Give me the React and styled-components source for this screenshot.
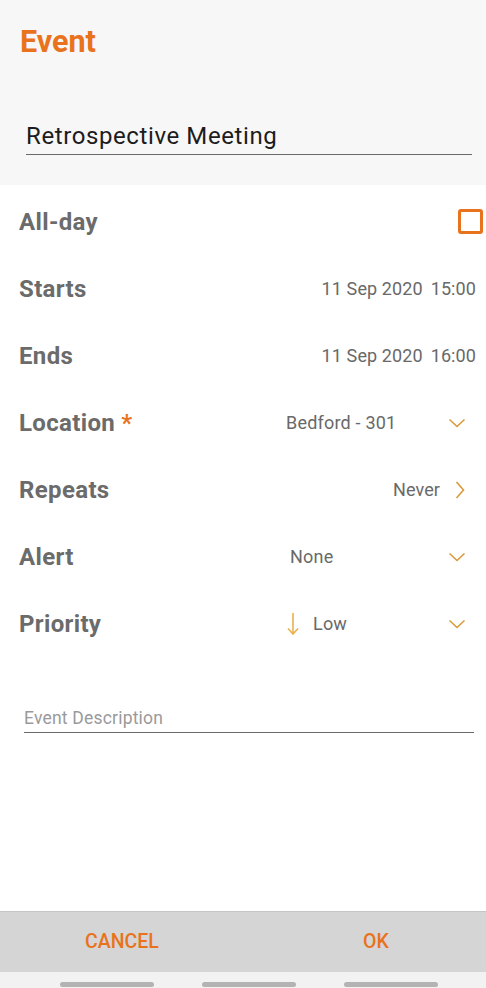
import React, {useState} from "react";
import styled, {createGlobalStyle} from "styled-components";

const ORANGE = "#e8731c";
const GOLD = "#d99a3c";

const GlobalStyle = createGlobalStyle`
    html, body {
        margin: 0;
        padding: 0;
        background: #fff;
        font-family: Roboto, "Liberation Sans", sans-serif;
    }
    * { box-sizing: border-box; }
`

const Page = styled.div`
    width: 486px;
    height: 988px;
    display: flex;
    flex-direction: column;
    background: #fff;
`

const Header = styled.div`
    height: 185px;
    background: #f7f7f7;
    padding: 24px 14px 0 20px;
    display: flex;
    flex-direction: column;
`

const Title = styled.h1`
    margin: 0;
    font-size: 30.5px;
    font-weight: 700;
    color: ${ORANGE};
    line-height: 36px;
`

const TitleInput = styled.input`
    margin: 62px 0 0 6px;
    width: 446px;
    border: none;
    border-bottom: 1.5px solid #6a6a6a;
    background: transparent;
    font-family: inherit;
    font-size: 24px;
    letter-spacing: 0.6px;
    color: #1c1c1c;
    padding: 0 0 4px 0;
    outline: none;
`

const Rows = styled.div`
    margin-top: 3px;
    display: flex;
    flex-direction: column;
`

const Row = styled.div`
    height: 67px;
    display: flex;
    align-items: center;
    padding: 0 10px 0 19px;
`

const Label = styled.span`
    font-size: 24px;
    font-weight: 700;
    letter-spacing: 0.35px;
    color: #6b6b6b;
    flex: 1;
`

const Star = styled.span`
    color: ${ORANGE};
    margin-left: 6px;
`

const Value = styled.span`
    font-size: 18px;
    letter-spacing: 0.1px;
    color: #696969;
`

const Time = styled.span`
    margin-left: 8px;
`

const Select = styled.div`
    width: 190px;
    display: flex;
    align-items: center;
    padding-left: ${p => p.$indent || 0}px;
`

const SelectText = styled.span`
    flex: 1;
    font-size: 18px;
    letter-spacing: 0.2px;
    color: #696969;
    display: flex;
    align-items: center;
    gap: 14px;
`

const Check = styled.div`
    width: 25px;
    height: 25px;
    margin-right: -7px;
    border: 3px solid ${ORANGE};
    border-radius: 3px;
`

const Icon = styled.svg`
    flex-shrink: 0;
    margin-left: ${p => p.$left || 0}px;
    margin-right: ${p => p.$right || 0}px;
`

const Desc = styled.input`
    margin: 51px 0 0 24px;
    width: 450px;
    border: none;
    border-bottom: 1.5px solid #6a6a6a;
    background: transparent;
    font-family: inherit;
    font-size: 17.5px;
    letter-spacing: 0.2px;
    padding: 0 0 4px 0;
    outline: none;
    &::placeholder { color: #9a9a9a; }
`

const Spacer = styled.div`
    flex: 1;
`

const Footer = styled.div`
    height: 61px;
    background: #d5d5d5;
    border-top: 1px solid #c6c6c6;
    display: grid;
    grid-template-columns: 244px 1fr;
    column-gap: 22px;
`

const FootButton = styled.button`
    border: none;
    background: transparent;
    font-family: inherit;
    font-size: 19.5px;
    font-weight: 500;
    color: ${ORANGE};
    cursor: pointer;
    padding: 0 0 2px;
`

const NavBar = styled.div`
    height: 16px;
    background: #f2f2f2;
    display: flex;
    justify-content: center;
    align-items: flex-end;
    gap: 48px;
    padding: 0 0 1px 12px;
`

const Pill = styled.div`
    width: 94px;
    height: 5px;
    border-radius: 3px;
    background: #b3b3b3;
`

const ChevronDown = () => (
    <Icon width="18" height="12" viewBox="0 0 18 12" $right={10}>
        <path d="M1.5 2.5 L9 9.5 L16.5 2.5" fill="none" stroke={GOLD} strokeWidth="1.6"/>
    </Icon>
)

const ChevronRight = () => (
    <Icon width="12" height="20" viewBox="0 0 12 20" $left={14} $right={10}>
        <path d="M2.5 2 L9.5 10 L2.5 18" fill="none" stroke={GOLD} strokeWidth="1.6"/>
    </Icon>
)

const ArrowDown = () => (
    <Icon width="12" height="24" viewBox="0 0 12 24">
        <path d="M6 1 V22 M1 16.5 L6 22 L11 16.5" fill="none" stroke="#e9b24f" strokeWidth="1.6"/>
    </Icon>
)

function App(){
    const [title, setTitle] = useState("Retrospective Meeting");
    const [desc, setDesc] = useState("");

    return(
        <Page>
            <GlobalStyle/>
            <Header>
                <Title>Event</Title>
                <TitleInput value={title} onChange={(e) => setTitle(e.target.value)}/>
            </Header>
            <Rows>
                <Row>
                    <Label>All-day</Label>
                    <Check/>
                </Row>
                <Row>
                    <Label>Starts</Label>
                    <Value>11 Sep 2020<Time>15:00</Time></Value>
                </Row>
                <Row>
                    <Label>Ends</Label>
                    <Value>11 Sep 2020<Time>16:00</Time></Value>
                </Row>
                <Row>
                    <Label>Location<Star>*</Star></Label>
                    <Select>
                        <SelectText>Bedford - 301</SelectText>
                        <ChevronDown/>
                    </Select>
                </Row>
                <Row>
                    <Label>Repeats</Label>
                    <Value>Never</Value>
                    <ChevronRight/>
                </Row>
                <Row>
                    <Label>Alert</Label>
                    <Select $indent={4}>
                        <SelectText>None</SelectText>
                        <ChevronDown/>
                    </Select>
                </Row>
                <Row>
                    <Label>Priority</Label>
                    <Select $indent={1}>
                        <SelectText><ArrowDown/>Low</SelectText>
                        <ChevronDown/>
                    </Select>
                </Row>
            </Rows>
            <Desc placeholder="Event Description" value={desc} onChange={(e) => setDesc(e.target.value)}/>
            <Spacer/>
            <Footer>
                <FootButton>CANCEL</FootButton>
                <FootButton>OK</FootButton>
            </Footer>
            <NavBar>
                <Pill/>
                <Pill/>
                <Pill/>
            </NavBar>
        </Page>
    );
}

export default App
